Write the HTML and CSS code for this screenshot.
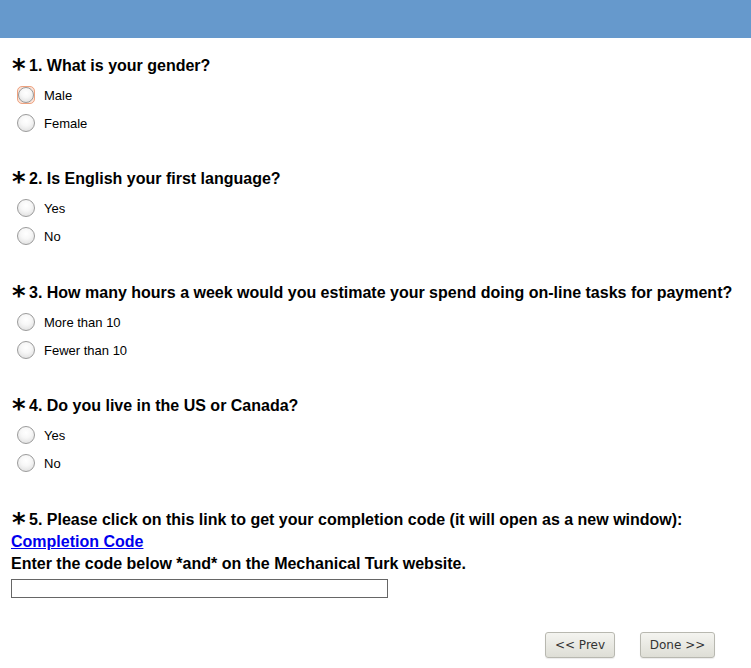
FILE: index.html
```html
<!DOCTYPE html>
<html>
<head>
<meta charset="utf-8">
<link rel="stylesheet" href="styles.css">
</head>
<body>
<div class="header"></div>
<div class="content">
  <div class="question">
    <div class="qtitle"><span class="req">*</span><span class="qtext">1. What is your gender?</span></div>
    <div class="options">
      <label class="opt"><span class="radio focus"><span class="dot"></span></span><span class="olabel">Male</span></label>
      <label class="opt"><span class="radio"><span class="dot"></span></span><span class="olabel">Female</span></label>
    </div>
  </div>
  <div class="question">
    <div class="qtitle"><span class="req">*</span><span class="qtext">2. Is English your first language?</span></div>
    <div class="options">
      <label class="opt"><span class="radio"><span class="dot"></span></span><span class="olabel">Yes</span></label>
      <label class="opt"><span class="radio"><span class="dot"></span></span><span class="olabel">No</span></label>
    </div>
  </div>
  <div class="question">
    <div class="qtitle"><span class="req">*</span><span class="qtext">3. How many hours a week would you estimate your spend doing on-line tasks for payment?</span></div>
    <div class="options">
      <label class="opt"><span class="radio"><span class="dot"></span></span><span class="olabel">More than 10</span></label>
      <label class="opt"><span class="radio"><span class="dot"></span></span><span class="olabel">Fewer than 10</span></label>
    </div>
  </div>
  <div class="question">
    <div class="qtitle"><span class="req">*</span><span class="qtext">4. Do you live in the US or Canada?</span></div>
    <div class="options">
      <label class="opt"><span class="radio"><span class="dot"></span></span><span class="olabel">Yes</span></label>
      <label class="opt"><span class="radio"><span class="dot"></span></span><span class="olabel">No</span></label>
    </div>
  </div>
  <div class="question last">
    <div class="qtitle"><span class="req">*</span><span class="qtext">5. Please click on this link to get your completion code (it will open as a new window):</span></div>
    <div class="linkline"><a class="clink" href="#">Completion Code</a></div>
    <div class="enter">Enter the code below *and* on the Mechanical Turk website.</div>
    <input class="code" type="text">
  </div>
  <div class="nav">
    <button class="btn prev">&lt;&lt; Prev</button>
    <button class="btn done">Done &gt;&gt;</button>
  </div>
</div>
</body>
</html>
```
FILE: styles.css
```css
html, body {
  margin: 0;
  padding: 0;
  background: #fff;
}
body {
  font-family: "Liberation Sans", Arial, sans-serif;
  color: #000;
  width: 751px;
  height: 668px;
  overflow: hidden;
}
.header {
  height: 38px;
  background: #6699cc;
}
.content {
  padding: 17px 0 0 11px;
}
.question {
  margin-bottom: 31px;
}
.question:nth-child(even) {
  margin-bottom: 32px;
}
.qtitle {
  display: flex;
  align-items: flex-start;
  height: 22px;
  font-weight: bold;
  font-size: 16px;
  line-height: 22px;
  white-space: nowrap;
}
.req {
  font-size: 26px;
  line-height: 18px;
  height: 18px;
  width: 18px;
  padding-left: 1px;
  box-sizing: border-box;
  position: relative;
  top: 5px;
  font-family: "DejaVu Sans", sans-serif;
  font-weight: bold;
}
.qtext {
  display: inline-block;
}
.options {
  display: flex;
  flex-direction: column;
  padding-top: 4px;
}
.opt {
  display: flex;
  align-items: center;
  height: 28px;
  font-size: 13px;
}
.radio {
  width: 18px;
  height: 18px;
  margin-left: 6px;
  margin-right: 9px;
  border-radius: 50%;
  box-sizing: border-box;
  border: 1px solid #9b9b9b;
  background: radial-gradient(circle at 50% 35%, #ffffff 0%, #f7f7f7 40%, #d9d9d9 100%);
  position: relative;
}
.radio.focus {
  border-radius: 5px;
  background: #fbe3d8;
  border-color: #eea27f;
}
.radio.focus .dot {
  position: absolute;
  inset: 0;
  border-radius: 50%;
  border: 1px solid #9b9b9b;
  background: radial-gradient(circle at 50% 35%, #ffffff 0%, #f7f7f7 40%, #d9d9d9 100%);
}
.last {
  margin-bottom: 0;
}
.linkline {
  font-weight: bold;
  font-size: 16px;
  line-height: 22px;
}
.clink {
  color: #0000ee;
  text-decoration: underline;
}
.enter {
  font-weight: bold;
  font-size: 16px;
  line-height: 22px;
}
.code {
  display: block;
  margin: 4px 0 0 0;
  width: 377px;
  height: 19px;
  box-sizing: border-box;
  border: 1px solid #666;
  padding: 0;
  border-radius: 0;
}
.nav {
  display: flex;
  justify-content: flex-end;
  gap: 25px;
  padding: 34px 36px 0 0;
}
.btn {
  font-family: "DejaVu Sans", sans-serif;
  font-size: 12px;
  color: #333;
  height: 26px;
  padding: 0;
  white-space: nowrap;
  border: 1px solid #b8b8b0;
  border-radius: 3px;
  background: linear-gradient(#f4f4f0, #deded6);
  box-shadow: 0 1px 1px rgba(0,0,0,0.08);
}
.prev { width: 70px; }
.done { width: 75px; }
```
